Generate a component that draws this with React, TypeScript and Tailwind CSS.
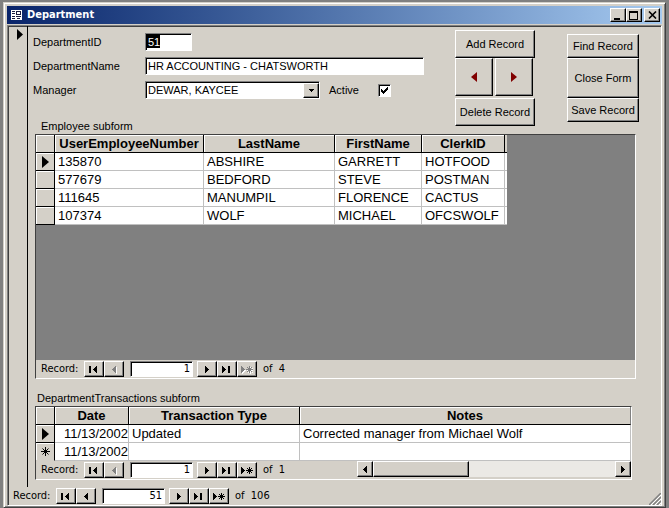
import React from "react";

const raised =
  "border border-t-white border-l-white border-r-black border-b-black shadow-[inset_-1px_-1px_0_#808080] bg-[#d4d0c8]";
const sunken =
  "border border-t-[#808080] border-l-[#808080] border-r-white border-b-white shadow-[inset_1px_1px_0_#000]";

type GlyphName = "first" | "prev" | "next" | "last" | "new";

const glyphs: Record<GlyphName, string> = {
  first: "M1 1h2v7H1zM9 1v7H8V7H7V6H6V5H5V4h1V3h1V2h1V1z",
  prev: "M8 1v7H7V7H6V6H5V5H4V4h1V3h1V2h1V1z",
  next: "M4 1v7h1V7h1V6h1V5h1V4H7V3H6V2H5V1z",
  last: "M1 1v7h1V7h1V6h1V5h1V4H4V3H3V2H2V1zM7 1h2v7H7z",
  new: "M0 1v7h1V7h1V6h1V5h1V4H3V3H2V2H1V1zM8 1h1v7H8zM5 4h7v1H5zM6 2h1v1H6zM10 2h1v1h-1zM7 3h3v3H7zM6 6h1v1H6zM10 6h1v1h-1z",
};

function Glyph({ name, off }: { name: GlyphName; off?: boolean }) {
  return (
    <svg width="12" height="9" viewBox="0 0 12 9" shapeRendering="crispEdges" aria-hidden="true">
      {off && <path d={glyphs[name]} fill="#fff" transform="translate(1 1)" />}
      <path d={glyphs[name]} fill={off ? "#808080" : "#000"} />
    </svg>
  );
}

function NavButton({ name, label, off }: { name: GlyphName; label: string; off?: boolean }) {
  return (
    <button type="button" aria-label={label} disabled={off} className={`flex h-4 w-5 items-center justify-center ${raised}`}>
      <Glyph name={name} off={off} />
    </button>
  );
}

function RecordNav({ id, value, total, prevOff, newOff }: { id: string; value: string; total: string; prevOff?: boolean; newOff?: boolean }) {
  return (
    <div className="flex h-[18px] items-center pl-[5px] font-['DejaVu_Sans_Condensed','DejaVu_Sans',sans-serif] text-[11px]">
      <label htmlFor={id} className="w-[43px]">Record:</label>
      <NavButton name="first" label="First record" />
      <NavButton name="prev" label="Previous record" off={prevOff} />
      <input id={id} defaultValue={value} className={`mr-1 ml-[6px] h-4 w-[63px] bg-white pr-[2px] text-right ${sunken}`} />
      <NavButton name="next" label="Next record" />
      <NavButton name="last" label="Last record" />
      <NavButton name="new" label="New record" off={newOff} />
      <span className="ml-[6px] whitespace-pre">of  {total}</span>
    </div>
  );
}

function FormButton({ children, className, label }: { children: React.ReactNode; className: string; label?: string }) {
  return (
    <button type="button" aria-label={label} className={`flex items-center justify-center text-[11px] whitespace-nowrap ${raised} ${className}`}>
      {children}
    </button>
  );
}

function RowMarker({ kind }: { kind?: "current" | "new" }) {
  return (
    <td className={`border-r border-b border-black bg-[#d4d0c8] p-0 shadow-[inset_1px_1px_0_#fff] ${kind === "new" ? "border-b-[#d4d0c8]" : ""}`}>
      {kind === "current" && (
        <svg className="mx-auto" width="7" height="12" viewBox="0 0 7 12" aria-hidden="true">
          <path d="M0 0L7 6L0 12z" />
        </svg>
      )}
      {kind === "new" && (
        <svg className="mx-auto" width="9" height="9" viewBox="0 0 9 9" stroke="#000" aria-hidden="true">
          <path d="M4.500 0V9M0 4.500H9M1.500 1.500L7.500 7.500M7.500 1.500L1.500 7.500" />
        </svg>
      )}
    </td>
  );
}

const headCell =
  "h-[18px] border-r border-b border-black bg-[#d4d0c8] p-0 text-center font-bold leading-[17px] shadow-[inset_1px_1px_0_#fff]";
const cell = "h-[18px] border-r border-b border-[#c0c0c0] bg-white py-0 pr-0 pl-[3px] leading-[17px] whitespace-nowrap";

const employees = [
  ["135870", "ABSHIRE", "GARRETT", "HOTFOOD"],
  ["577679", "BEDFORD", "STEVE", "POSTMAN"],
  ["111645", "MANUMPIL", "FLORENCE", "CACTUS"],
  ["107374", "WOLF", "MICHAEL", "OFCSWOLF"],
];

function EmployeeTable() {
  return (
    <table className="w-[471px] table-fixed border-separate border-spacing-0 text-[13px]">
      <colgroup>
        <col className="w-[19px]" />
        <col className="w-[149px]" />
        <col className="w-[131px]" />
        <col className="w-[87px]" />
        <col className="w-[83px]" />
        <col className="w-[2px]" />
      </colgroup>
      <thead>
        <tr>
          <th className={headCell} aria-label="Row" />
          <th className={headCell}>UserEmployeeNumber</th>
          <th className={headCell}>LastName</th>
          <th className={headCell}>FirstName</th>
          <th className={headCell}>ClerkID</th>
          <td className="border-b border-black bg-[#d4d0c8] p-0" />
        </tr>
      </thead>
      <tbody>
        {employees.map((row, i) => (
          <tr key={row[0]}>
            <RowMarker kind={i === 0 ? "current" : undefined} />
            {row.map((v) => (
              <td key={v} className={cell}>{v}</td>
            ))}
            <td className="border-b border-[#c0c0c0] bg-white p-0" />
          </tr>
        ))}
      </tbody>
    </table>
  );
}

function TransactionTable() {
  return (
    <table className="w-full table-fixed border-separate border-spacing-0 text-[13px]">
      <colgroup>
        <col className="w-[19px]" />
        <col className="w-[74px]" />
        <col className="w-[171px]" />
        <col />
      </colgroup>
      <thead>
        <tr>
          <th className={headCell} aria-label="Row" />
          <th className={headCell}>Date</th>
          <th className={headCell}>Transaction Type</th>
          <th className={`${headCell} border-r-[#808080]`}>Notes</th>
        </tr>
      </thead>
      <tbody>
        <tr>
          <RowMarker kind="current" />
          <td className={`${cell} text-right`}>11/13/2002</td>
          <td className={cell}>Updated</td>
          <td className={cell}>Corrected manager from Michael Wolf</td>
        </tr>
        <tr>
          <RowMarker kind="new" />
          <td className={`${cell} text-right`}>11/13/2002</td>
          <td className={cell} />
          <td className={cell} />
        </tr>
      </tbody>
    </table>
  );
}

function TitleBar() {
  const box = `flex h-[14px] w-4 items-center justify-center ${raised}`;
  return (
    <header className="flex h-[18px] items-center bg-linear-to-r from-[#0a246a] to-[#a6caf0] pr-[2px] pl-1">
      <svg width="11" height="10" viewBox="0 0 11 10" shapeRendering="crispEdges" aria-hidden="true">
        <path fill="#fff" d="M0 0h11v10H0z" />
        <path fill="#1c1c40" d="M1 1h3v1H1zM1 3h3v1H1zM1 6h3v1H1zM1 8h3v1H1zM5 1h5v1H5zM5 1h1v4H5zM9 1h1v4H9zM5 4h5v1H5zM5 6h5v1H5zM6 8h3v1H6z" />
      </svg>
      <h1 className="ml-[5px] flex-1 font-['DejaVu_Sans_Condensed','DejaVu_Sans',sans-serif] text-[11px] font-bold text-white">
        Department
      </h1>
      <button type="button" aria-label="Minimize" className={box}>
        <svg width="10" height="9" viewBox="0 0 10 9" shapeRendering="crispEdges"><path d="M1 7h6v2H1z" /></svg>
      </button>
      <button type="button" aria-label="Maximize" className={box}>
        <svg width="10" height="9" viewBox="0 0 10 9" shapeRendering="crispEdges"><path fillRule="evenodd" d="M0 0h9v9H0zM1 2v6h7V2z" /></svg>
      </button>
      <button type="button" aria-label="Close" className={`ml-[2px] ${box}`}>
        <svg width="9" height="8" viewBox="0 0 9 8"><path d="M1 .5L8 7.500M8 .5L1 7.500" stroke="#000" strokeWidth="1.600" /></svg>
      </button>
    </header>
  );
}

function FormFields() {
  const row = "flex h-6 items-center";
  const label = "w-[112px] text-[11px]";
  const field = `h-[18px] px-[2px] text-[11px] ${sunken}`;
  return (
    <div className="w-[422px] pl-[5px]">
      <div className={row}>
        <label htmlFor="dept-id" className={label}>DepartmentID</label>
        <input
          id="dept-id"
          defaultValue="51"
          className={`${field} w-[47px] bg-white bg-[linear-gradient(#000,#000)] bg-[length:13px_13px] bg-[position:1px_1px] bg-no-repeat text-white`}
        />
      </div>
      <div className={row}>
        <label htmlFor="dept-name" className={label}>DepartmentName</label>
        <input id="dept-name" defaultValue="HR ACCOUNTING - CHATSWORTH" className={`${field} w-[279px] bg-white`} />
      </div>
      <div className={row}>
        <label htmlFor="manager" className={label}>Manager</label>
        <div className="relative w-[175px]">
          <select id="manager" className={`${field} block w-full appearance-none bg-white`}>
            <option>DEWAR, KAYCEE</option>
          </select>
          <span className={`pointer-events-none absolute top-[2px] right-[1px] flex h-[15px] w-4 items-center justify-center ${raised}`}>
            <svg width="5" height="3" viewBox="0 0 5 3" shapeRendering="crispEdges"><path d="M0 0h5v1H4v1H3v1H2V2H1V1H0z" /></svg>
          </span>
        </div>
        <label htmlFor="active" className="ml-[9px] w-[49px] text-[11px]">Active</label>
        <span className="grid">
          <input id="active" type="checkbox" defaultChecked className={`peer col-start-1 row-start-1 size-[13px] appearance-none bg-white ${sunken}`} />
          <svg className="pointer-events-none invisible col-start-1 row-start-1 peer-checked:visible" width="13" height="13" viewBox="0 0 13 13" shapeRendering="crispEdges">
            <path d="M3 5h1v1h1v1h1V6h1V5h1V4h1V3h1v3H9v1H8v1H7v1H6v1H5V9H4V8H3z" />
          </svg>
        </span>
      </div>
    </div>
  );
}

function Actions() {
  return (
    <>
      <div className="w-20">
        <FormButton className="h-7 w-full">Add Record</FormButton>
        <div className="mb-[2px] flex gap-[2px]">
          <FormButton label="Previous" className="h-[38px] w-[38px]">
            <svg width="6" height="10" viewBox="0 0 6 10"><path fill="#800000" d="M6 0v10L0 5z" /></svg>
          </FormButton>
          <FormButton label="Next" className="h-[38px] w-[38px]">
            <svg width="6" height="10" viewBox="0 0 6 10"><path fill="#800000" d="M0 0v10l6-5z" /></svg>
          </FormButton>
        </div>
        <FormButton className="h-7 w-full">Delete Record</FormButton>
      </div>
      <div className="ml-8 w-[72px] pt-1">
        <FormButton className="h-6 w-full">Find Record</FormButton>
        <FormButton className="h-10 w-full">Close Form</FormButton>
        <FormButton className="h-6 w-full">Save Record</FormButton>
      </div>
    </>
  );
}

function ScrollBar() {
  const arrow = `flex h-4 w-4 items-center justify-center ${raised}`;
  return (
    <div className="flex h-4 flex-1 bg-[#ebe9e5]">
      <button type="button" aria-label="Scroll left" className={arrow}>
        <svg width="4" height="7" viewBox="0 0 4 7" shapeRendering="crispEdges"><path d="M4 0v7H3V6H2V5H1V4H0V3h1V2h1V1h1V0z" /></svg>
      </button>
      <div className={`w-24 ${raised}`} />
      <button type="button" aria-label="Scroll right" className={`ml-auto ${arrow}`}>
        <svg width="4" height="7" viewBox="0 0 4 7" shapeRendering="crispEdges"><path d="M0 0v7h1V6h1V5h1V4h1V3H3V2H2V1H1V0z" /></svg>
      </button>
    </div>
  );
}

export default function App() {
  return (
    <div className="min-h-screen bg-[#808080] pt-[2px] pr-[3px] pl-[3px] font-['Liberation_Sans',Arial,sans-serif] text-black">
      <main className="border border-t-[#d4d0c8] border-r-[#404040] border-b-[#404040] border-l-[#d4d0c8] bg-[#d4d0c8] px-[3px] pt-[3px] pb-px shadow-[inset_1px_1px_0_#fff,inset_-1px_-1px_0_#808080]">
        <TitleBar />
        <div className="mt-px border border-t-[#808080] border-r-white border-b-white border-l-[#808080] shadow-[inset_1px_1px_0_#404040]">
          <div className="flex">
            <div className="w-5 shrink-0 border-r border-black pl-[9px]">
              <svg className="mt-[3px]" width="6" height="11" viewBox="0 0 6 11" aria-hidden="true"><path d="M0 0l6 5.500L0 11z" /></svg>
            </div>
            <div className="min-w-0 flex-1 pt-1 pb-[7px]">
              <div className="flex items-start">
                <FormFields />
                <div className="ml-[5px] flex"><Actions /></div>
              </div>
              <h2 className="-mt-[7px] ml-[13px] h-[15px] text-[11px] leading-[15px]">Employee subform</h2>
              <section className="mr-[25px] ml-[7px] border border-t-[#404040] border-r-white border-b-white border-l-[#404040]">
                <div className="h-[225px] bg-[#808080]"><EmployeeTable /></div>
                <RecordNav id="employee-record" value="1" total="4" prevOff newOff />
              </section>
              <h2 className="mt-3 ml-[9px] h-[15px] text-[11px] leading-[15px]">DepartmentTransactions subform</h2>
              <section className="mr-[29px] ml-[7px] border border-t-[#404040] border-r-white border-b-white border-l-[#404040]">
                <TransactionTable />
                <div className="flex">
                  <div className="w-[321px]"><RecordNav id="transaction-record" value="1" total="1" prevOff /></div>
                  <ScrollBar />
                </div>
              </section>
            </div>
          </div>
          <div className="flex items-end justify-between">
            <RecordNav id="department-record" value="51" total="106" />
            <svg width="12" height="12" viewBox="0 0 12 12" aria-hidden="true">
              <path d="M0 12L12 0M4 12L12 4M8 12L12 8" stroke="#808080" strokeWidth="1.500" />
              <path d="M2 12L12 2M6 12L12 6M10 12L12 10" stroke="#fff" strokeWidth="1" />
            </svg>
          </div>
        </div>
      </main>
    </div>
  );
}
